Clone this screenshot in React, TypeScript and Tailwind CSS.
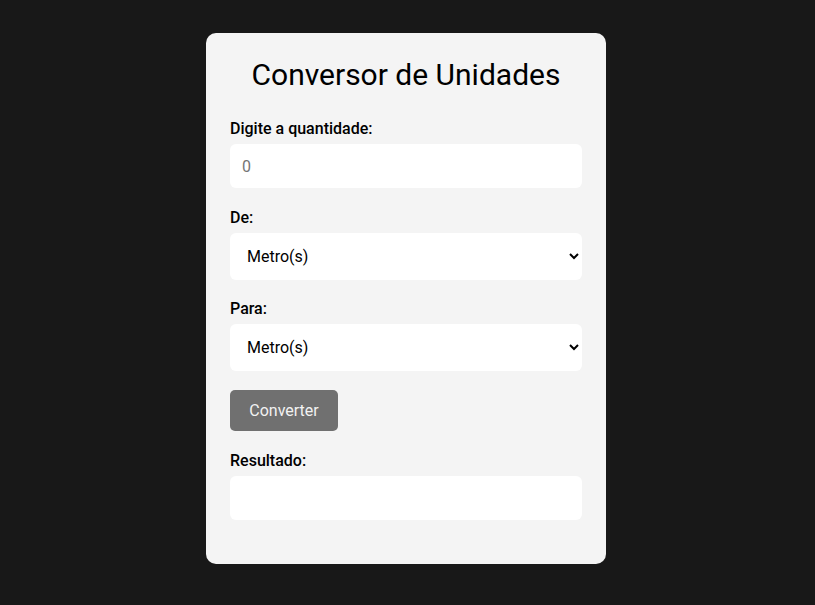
import { useState } from "react";

const units = ["Metro(s)", "Quilômetro(s)", "Centímetro(s)", "Milímetro(s)"];

export default function App() {
  const [amount, setAmount] = useState("");
  const [from, setFrom] = useState(units[0]);
  const [to, setTo] = useState(units[0]);
  const [result, setResult] = useState("");

  return (
    <div className="flex min-h-screen justify-center bg-[#181818] pt-[33px] pr-[3px] font-['Roboto',sans-serif] text-black">
      <div className="h-fit w-[400px] rounded-[10px] bg-[#f4f4f4] px-6 pt-[24px] pb-[44px]">
        <h1 className="mb-[27px] text-center text-[30px] leading-[35px] font-normal">Conversor de Unidades</h1>

        <label className="mb-[6px] block text-[16px] leading-[19px] font-medium">Digite a quantidade:</label>
        <input
          type="number"
          placeholder="0"
          value={amount}
          onChange={(e) => setAmount(e.target.value)}
          className="mb-5 block h-[44px] w-full rounded-[6px] bg-white px-3 text-[16px] outline-none placeholder:text-[#757575]"
        />

        <label className="mb-[6px] block text-[16px] leading-[19px] font-medium">De:</label>
        <select
          value={from}
          onChange={(e) => setFrom(e.target.value)}
          className="mb-[19px] block h-[47px] w-full rounded-[6px] bg-white pr-[14px] pl-[13px] text-[16px] outline-none"
        >
          {units.map((u) => (
            <option key={u}>{u}</option>
          ))}
        </select>

        <label className="mb-[6px] block text-[16px] leading-[19px] font-medium">Para:</label>
        <select
          value={to}
          onChange={(e) => setTo(e.target.value)}
          className="mb-[19px] block h-[47px] w-full rounded-[6px] bg-white pr-[14px] pl-[13px] text-[16px] outline-none"
        >
          {units.map((u) => (
            <option key={u}>{u}</option>
          ))}
        </select>

        <button
          onClick={() => setResult(amount ? `${amount} ${to}` : "")}
          className="mb-5 block h-[41px] w-[108px] rounded-[5px] bg-[#707070] text-[16px] text-[#f2f2f2]"
        >
          Converter
        </button>

        <label className="mb-[6px] block text-[16px] leading-[19px] font-medium">Resultado:</label>
        <div className="flex h-[44px] w-full items-center rounded-[6px] bg-white px-3 text-[16px]">{result}</div>
      </div>
    </div>
  );
}
